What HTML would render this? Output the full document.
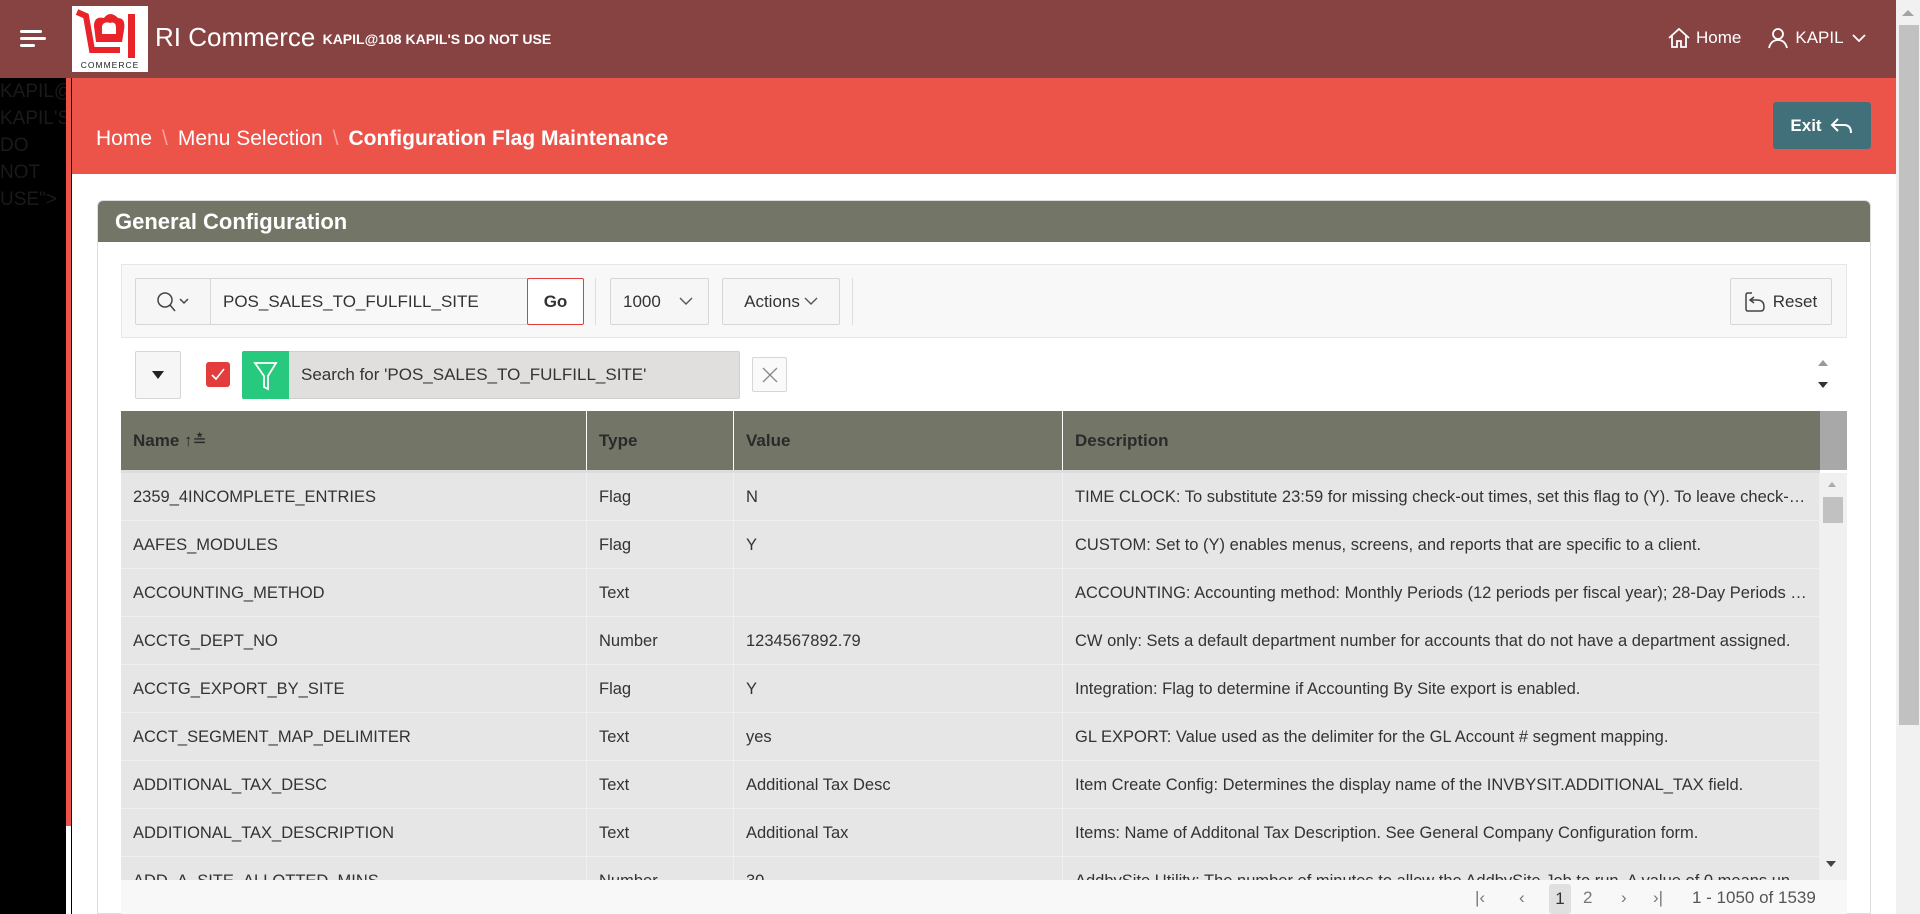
<!DOCTYPE html>
<html><head><meta charset="utf-8">
<style>
*{box-sizing:border-box;margin:0;padding:0}
body{width:1920px;height:914px;overflow:hidden;background:#fff;font-family:"Liberation Sans",sans-serif;position:relative;color:#333}
.abs{position:absolute}
#hdr{left:0;top:0;width:1896px;height:78px;background:#874242}
#vs{left:1896px;top:0;width:24px;height:914px;background:#f1f1f1}
#side{left:0;top:78px;width:66px;height:836px;background:#000;color:#1a1a1a;font-size:19px;line-height:27px;overflow:hidden;padding-left:0}
#band{left:72px;top:78px;width:1824px;height:96px;background:#ec544a}
.bc{left:96px;top:127px;font-size:21px;color:#fff}
.bc span{color:#f3a49e;margin:0 10px}
#card{left:97px;top:200px;width:1774px;height:714px;border:1px solid #ddd;border-radius:6px 6px 0 0;overflow:hidden;background:#fff}
.btn{position:absolute;background:#f6f6f6;border:1px solid #d6d6d6;border-radius:2px;font-size:17px;color:#333;display:flex;align-items:center;justify-content:center}
.row{position:absolute;left:121px;width:1699px;height:48px;background:#e6e6e6;border-bottom:1px solid #efefef;font-size:16.5px;color:#333}
.row div{position:absolute;top:0;line-height:48px;white-space:nowrap;overflow:hidden;text-overflow:ellipsis;border-right:1px solid #efefef;height:48px;padding-left:12px}
.c1{left:0;width:466px}.c2{left:466px;width:147px}.c3{left:613px;width:329px}.c4{left:942px;width:757px;padding-right:10px}
.th{position:absolute;top:0;height:59px;line-height:59px;font-weight:bold;font-size:17px;color:#2a2a2a;padding-left:12px;border-right:1px solid #fff}
</style></head><body>
<div id="hdr" class="abs">
  <div class="abs" style="left:20px;top:30px"><div style="width:22px;height:3px;background:#fff;border-radius:2px"></div><div style="width:26px;height:3px;background:#fff;border-radius:2px;margin-top:4px"></div><div style="width:15px;height:3px;background:#fff;border-radius:2px;margin-top:4px"></div></div>
  <div class="abs" style="left:72px;top:6px;width:76px;height:66px;background:#fff">
    <svg width="76" height="66" viewBox="0 0 76 66"><path d="M5 6 L14 10 L20 44 L48 44" stroke="#e8232a" stroke-width="6" fill="none"/><path d="M22 20 Q22 10 32 12 Q38 4 46 12 Q54 12 52 24 L50 36 L24 36 Z" fill="#e8232a"/><path d="M30 20 Q32 15 38 17 Q44 15 44 22 L44 28 L30 28Z" fill="#fff"/><rect x="56" y="8" width="7" height="44" fill="#e8232a"/><text x="38" y="62" font-size="8.5" text-anchor="middle" fill="#222" letter-spacing="1" font-family="Liberation Sans">COMMERCE</text></svg>
  </div>
  <div class="abs" style="left:155px;top:22px;color:#fff;font-size:26px">RI Commerce <span style="font-size:14px;font-weight:bold;position:relative;top:-2px">KAPIL@108 KAPIL'S DO NOT USE</span></div>
  <div class="abs" style="left:1667px;top:27px;color:#fff;font-size:17px;display:flex;align-items:center">
    <svg width="24" height="22" viewBox="0 0 24 22"><path d="M2 11 L12 2 L22 11 M5 9 V20 H10 V14 H14 V20 H19 V9" stroke="#fff" stroke-width="1.8" fill="none"/></svg>
    <span style="margin-left:5px">Home</span>
    <svg style="margin-left:26px" width="22" height="22" viewBox="0 0 22 22"><circle cx="11" cy="7" r="5" stroke="#fff" stroke-width="1.8" fill="none"/><path d="M2 21 Q4 13 11 13 Q18 13 20 21" stroke="#fff" stroke-width="1.8" fill="none"/></svg>
    <span style="margin-left:6px">KAPIL</span>
    <svg style="margin-left:8px" width="14" height="10" viewBox="0 0 14 10"><path d="M1 2 L7 8 L13 2" stroke="#fff" stroke-width="1.8" fill="none"/></svg>
  </div>
</div>
<div id="vs" class="abs"><div class="abs" style="left:3px;top:25px;width:20px;height:700px;background:#c1c1c1"></div><div class="abs" style="left:6px;top:10px;width:0;height:0;border:6px solid transparent;border-bottom-color:#a3a3a3;border-top:0"></div></div>
<div id="side" class="abs">KAPIL@<br>KAPIL'S<br>DO<br>NOT<br>USE"&gt;</div>
<div class="abs" style="left:66px;top:78px;width:5px;height:748px;background:#ec544a"></div>
<div class="abs" style="left:71px;top:78px;width:1px;height:836px;background:#000"></div>
<div id="band" class="abs"></div>
<div class="abs bc">Home<span>\</span>Menu Selection<span>\</span><b>Configuration Flag Maintenance</b></div>
<div class="abs" style="left:1773px;top:102px;width:98px;height:47px;background:#42707a;border-radius:3px;color:#fff;font-weight:bold;font-size:17px;display:flex;align-items:center;justify-content:center">Exit <svg style="margin-left:8px" width="24" height="18" viewBox="0 0 24 18"><path d="M8 2 L2 8 L8 14 M2 8 H14 Q21 8 21 16" stroke="#fff" stroke-width="2" fill="none"/></svg></div>
<div id="card" class="abs">
  <div style="height:41px;background:#737566;color:#fff;font-weight:bold;font-size:22px;line-height:41px;padding-left:17px">General Configuration</div>
</div>
<div class="abs" style="left:121px;top:264px;width:1726px;height:74px;background:#f8f8f8;border:1px solid #e6e6e6"></div>
<div class="btn" style="left:135px;top:278px;width:76px;height:47px"><svg width="34" height="20" viewBox="0 0 34 20"><circle cx="9" cy="8" r="7" stroke="#444" stroke-width="1.5" fill="none"/><path d="M14 13 L19 19 M24 7 L28 11 L32 7" stroke="#444" stroke-width="1.5" fill="none"/></svg></div>
<div class="abs" style="left:210px;top:278px;width:318px;height:47px;background:#f8f8f8;border:1px solid #d6d6d6;font-size:17px;line-height:45px;padding-left:12px">POS_SALES_TO_FULFILL_SITE</div>
<div class="btn" style="left:527px;top:278px;width:57px;height:47px;background:#fff;border:1px solid #e23c3c;font-weight:bold">Go</div>
<div class="abs" style="left:595px;top:278px;width:1px;height:47px;background:#ddd"></div>
<div class="btn" style="left:610px;top:278px;width:99px;height:47px;justify-content:flex-start;padding-left:12px">1000<svg style="margin-left:18px" width="14" height="9" viewBox="0 0 14 9"><path d="M1 1 L7 7 L13 1" stroke="#555" stroke-width="1.4" fill="none"/></svg></div>
<div class="btn" style="left:722px;top:278px;width:118px;height:47px">Actions<svg style="margin-left:4px" width="14" height="9" viewBox="0 0 14 9"><path d="M1 1 L7 7 L13 1" stroke="#555" stroke-width="1.4" fill="none"/></svg></div>
<div class="abs" style="left:852px;top:278px;width:1px;height:47px;background:#ddd"></div>
<div class="btn" style="left:1730px;top:278px;width:102px;height:47px"><svg width="22" height="22" viewBox="0 0 22 22"><path d="M7 2 H3 Q1 2 1 4 V18 Q1 20 3 20 H16 Q19 20 19 16 Q19 9 12 9 H6 M9 6 L5 9 L9 12" stroke="#444" stroke-width="1.5" fill="none"/></svg><span style="margin-left:6px">Reset</span></div>
<div class="btn" style="left:135px;top:351px;width:46px;height:48px"><div style="width:0;height:0;border:6px solid transparent;border-top:8px solid #222;border-bottom:0"></div></div>
<div class="abs" style="left:206px;top:362px;width:24px;height:25px;background:#e23c3c;border-radius:3px"><svg width="24" height="25" viewBox="0 0 24 25"><path d="M6 13 L10 17 L18 7" stroke="#fff" stroke-width="1.6" fill="none"/></svg></div>
<div class="abs" style="left:242px;top:351px;width:498px;height:48px;background:#e0dfdd;border:1px solid #d0d0d0;border-radius:2px;font-size:17px;line-height:46px;padding-left:58px">Search for 'POS_SALES_TO_FULFILL_SITE'</div>
<div class="abs" style="left:242px;top:351px;width:47px;height:48px;background:#27c97f;border-radius:2px 0 0 2px"><svg width="47" height="48" viewBox="0 0 47 48"><path d="M13 12 H34 L26 25 V38 L22 36 V25 Z" stroke="#fff" stroke-width="1.8" fill="none"/></svg></div>
<div class="btn" style="left:752px;top:357px;width:35px;height:35px;background:#fafafa"><svg width="16" height="16" viewBox="0 0 16 16"><path d="M1 1 L15 15 M15 1 L1 15" stroke="#888" stroke-width="1.3"/></svg></div>
<div class="abs" style="left:1818px;top:360px;width:0;height:0;border:5px solid transparent;border-bottom:6px solid #999;border-top:0"></div>
<div class="abs" style="left:1818px;top:382px;width:0;height:0;border:5px solid transparent;border-top:6px solid #333;border-bottom:0"></div>
<div class="abs" style="left:121px;top:411px;width:1699px;height:59px;background:#737566">
  <div class="th" style="left:0;width:466px">Name <span style="font-weight:normal">↑≛</span></div>
  <div class="th" style="left:466px;width:147px">Type</div>
  <div class="th" style="left:613px;width:329px">Value</div>
  <div class="th" style="left:942px;width:757px;border-right:0">Description</div>
</div>
<div class="abs" style="left:1820px;top:411px;width:27px;height:59px;background:#a8a8a8"></div>
<div class="abs" style="left:121px;top:470px;width:1699px;height:3px;background:#ddd"></div>
<div class="row" style="top:473px"><div class="c1">2359_4INCOMPLETE_ENTRIES</div><div class="c2">Flag</div><div class="c3">N</div><div class="c4">TIME CLOCK: To substitute 23:59 for missing check-out times, set this flag to (Y). To leave check-out times blank, set to (N).</div></div>
<div class="row" style="top:521px"><div class="c1">AAFES_MODULES</div><div class="c2">Flag</div><div class="c3">Y</div><div class="c4">CUSTOM: Set to (Y) enables menus, screens, and reports that are specific to a client.</div></div>
<div class="row" style="top:569px"><div class="c1">ACCOUNTING_METHOD</div><div class="c2">Text</div><div class="c3"></div><div class="c4">ACCOUNTING: Accounting method: Monthly Periods (12 periods per fiscal year); 28-Day Periods (13 periods)</div></div>
<div class="row" style="top:617px"><div class="c1">ACCTG_DEPT_NO</div><div class="c2">Number</div><div class="c3">1234567892.79</div><div class="c4">CW only: Sets a default department number for accounts that do not have a department assigned.</div></div>
<div class="row" style="top:665px"><div class="c1">ACCTG_EXPORT_BY_SITE</div><div class="c2">Flag</div><div class="c3">Y</div><div class="c4">Integration: Flag to determine if Accounting By Site export is enabled.</div></div>
<div class="row" style="top:713px"><div class="c1">ACCT_SEGMENT_MAP_DELIMITER</div><div class="c2">Text</div><div class="c3">yes</div><div class="c4">GL EXPORT: Value used as the delimiter for the GL Account # segment mapping.</div></div>
<div class="row" style="top:761px"><div class="c1">ADDITIONAL_TAX_DESC</div><div class="c2">Text</div><div class="c3">Additional Tax Desc</div><div class="c4">Item Create Config: Determines the display name of the INVBYSIT.ADDITIONAL_TAX field.</div></div>
<div class="row" style="top:809px"><div class="c1">ADDITIONAL_TAX_DESCRIPTION</div><div class="c2">Text</div><div class="c3">Additional Tax</div><div class="c4">Items: Name of Additonal Tax Description. See General Company Configuration form.</div></div>
<div class="row" style="top:857px"><div class="c1">ADD_A_SITE_ALLOTTED_MINS</div><div class="c2">Number</div><div class="c3">30</div><div class="c4">AddbySite Utility: The number of minutes to allow the AddbySite Job to run. A value of 0 means unlimited.</div></div>
<div class="abs" style="left:1820px;top:473px;width:27px;height:407px;background:#f0f0f0"></div>
<div class="abs" style="left:1823px;top:497px;width:20px;height:26px;background:#c1c1c1"></div>
<div class="abs" style="left:1828px;top:482px;width:0;height:0;border:4px solid transparent;border-bottom:5px solid #aaa;border-top:0"></div>
<div class="abs" style="left:1826px;top:861px;width:0;height:0;border:5px solid transparent;border-top:6px solid #444;border-bottom:0"></div>
<div class="abs" style="left:121px;top:880px;width:1726px;height:34px;background:#f8f8f8;font-size:17px;color:#777">
  <div class="abs" style="left:1354px;top:8px;letter-spacing:0">|‹</div>
  <div class="abs" style="left:1398px;top:8px">‹</div>
  <div class="abs" style="left:1428px;top:4px;width:22px;height:30px;background:#e0e0e0;border-radius:3px;text-align:center;line-height:30px;color:#333">1</div>
  <div class="abs" style="left:1462px;top:8px">2</div>
  <div class="abs" style="left:1500px;top:8px">›</div>
  <div class="abs" style="left:1532px;top:8px">›|</div>
  <div class="abs" style="left:1571px;top:8px;color:#555">1 - 1050 of 1539</div>
</div>
</body></html>
